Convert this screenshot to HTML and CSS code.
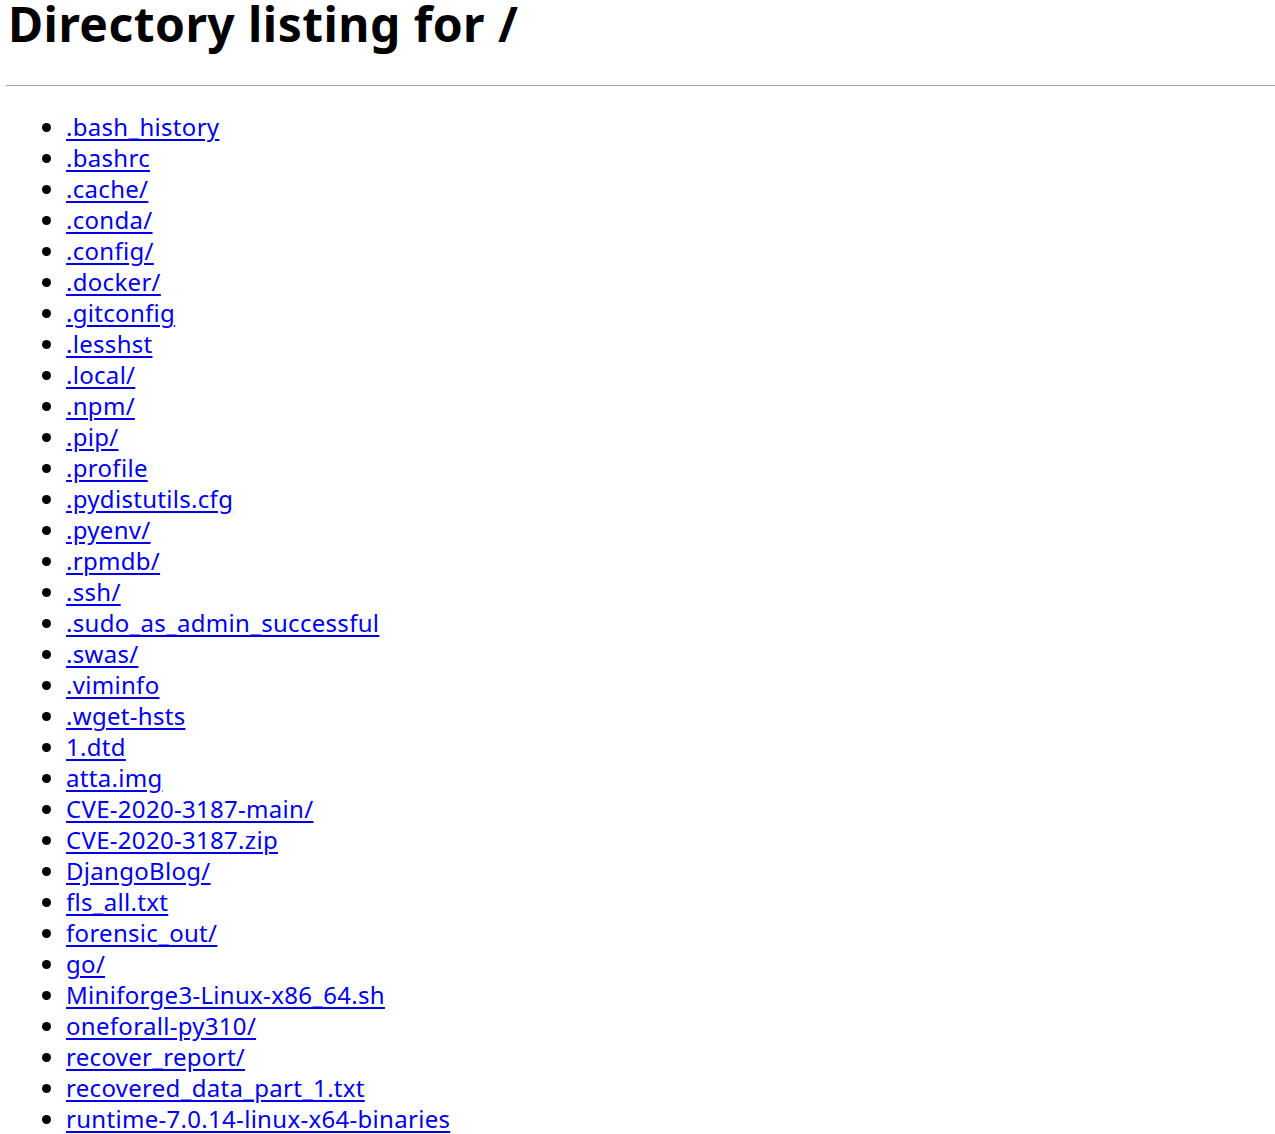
FILE: index.html
```html
<!DOCTYPE html>
<html>
<head>
<meta charset="utf-8">
<title>Directory listing for /</title>
<link rel="stylesheet" href="styles.css">
</head>
<body>
<h1 class="title">Directory listing for /</h1>
<hr class="rule">
<ul class="listing">
<li><a href=".bash_history">.bash_history</a></li>
<li><a href=".bashrc">.bashrc</a></li>
<li><a href=".cache/">.cache/</a></li>
<li><a href=".conda/">.conda/</a></li>
<li><a href=".config/">.config/</a></li>
<li><a href=".docker/">.docker/</a></li>
<li><a href=".gitconfig">.gitconfig</a></li>
<li><a href=".lesshst">.lesshst</a></li>
<li><a href=".local/">.local/</a></li>
<li><a href=".npm/">.npm/</a></li>
<li><a href=".pip/">.pip/</a></li>
<li><a href=".profile">.profile</a></li>
<li><a href=".pydistutils.cfg">.pydistutils.cfg</a></li>
<li><a href=".pyenv/">.pyenv/</a></li>
<li><a href=".rpmdb/">.rpmdb/</a></li>
<li><a href=".ssh/">.ssh/</a></li>
<li><a href=".sudo_as_admin_successful">.sudo_as_admin_successful</a></li>
<li><a href=".swas/">.swas/</a></li>
<li><a href=".viminfo">.viminfo</a></li>
<li><a href=".wget-hsts">.wget-hsts</a></li>
<li><a href="1.dtd">1.dtd</a></li>
<li><a href="atta.img">atta.img</a></li>
<li><a href="CVE-2020-3187-main/">CVE-2020-3187-main/</a></li>
<li><a href="CVE-2020-3187.zip">CVE-2020-3187.zip</a></li>
<li><a href="DjangoBlog/">DjangoBlog/</a></li>
<li><a href="fls_all.txt">fls_all.txt</a></li>
<li><a href="forensic_out/">forensic_out/</a></li>
<li><a href="go/">go/</a></li>
<li><a href="Miniforge3-Linux-x86_64.sh">Miniforge3-Linux-x86_64.sh</a></li>
<li><a href="oneforall-py310/">oneforall-py310/</a></li>
<li><a href="recover_report/">recover_report/</a></li>
<li><a href="recovered_data_part_1.txt">recovered_data_part_1.txt</a></li>
<li><a href="runtime-7.0.14-linux-x64-binaries">runtime-7.0.14-linux-x64-binaries</a></li>
</ul>
</body>
</html>
```
FILE: styles.css
```css
html, body {
  margin: 0;
  padding: 0;
  background: #fff;
}
body {
  font-family: "Noto Sans", "Open Sans", sans-serif;
  color: #000;
  overflow: hidden;
}
.title {
  margin: 0;
  padding-left: 8px;
  font-size: 48px;
  font-weight: 700;
  line-height: 48px;
  height: 60px;
  letter-spacing: 0.45px;
}
.rule {
  margin: 25px 0 0 6px;
  border: 0;
  border-top: 1px solid #a0a0a0;
  height: 0;
}
.listing {
  margin: 25px 0 0 0;
  padding-left: 66px;
  font-size: 24px;
  line-height: 31px;
  list-style: disc;
}
.listing a {
  color: #0000ee;
  text-decoration: underline;
  letter-spacing: 0.3px;
  text-underline-offset: 3px;
}
```
